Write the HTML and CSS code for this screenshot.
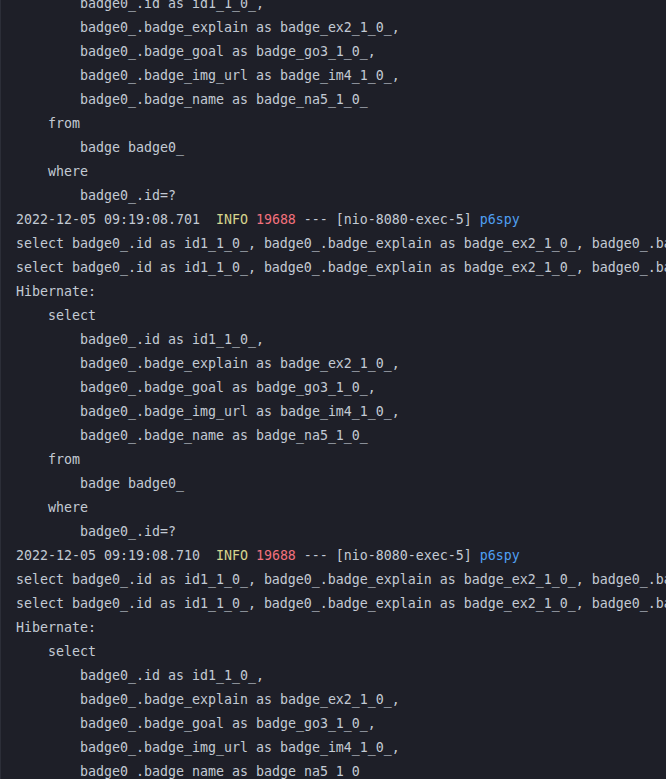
FILE: index.html
```html
<!DOCTYPE html>
<html>
<head>
<meta charset="utf-8">
<link rel="stylesheet" href="styles.css">
</head>
<body>
<div class="console">
<div class="log">
<div class="l i2">badge0_.id as id1_1_0_,</div>
<div class="l i2">badge0_.badge_explain as badge_ex2_1_0_,</div>
<div class="l i2">badge0_.badge_goal as badge_go3_1_0_,</div>
<div class="l i2">badge0_.badge_img_url as badge_im4_1_0_,</div>
<div class="l i2">badge0_.badge_name as badge_na5_1_0_</div>
<div class="l i1">from</div>
<div class="l i2">badge badge0_</div>
<div class="l i1">where</div>
<div class="l i2">badge0_.id=?</div>
<div class="l">2022-12-05 09:19:08.701  <span class="info">INFO</span> <span class="pid">19688</span> --- [nio-8080-exec-5] <span class="src">p6spy</span></div>
<div class="l">select badge0_.id as id1_1_0_, badge0_.badge_explain as badge_ex2_1_0_, badge0_.badge_goal as badge_go3_1_0_</div>
<div class="l">select badge0_.id as id1_1_0_, badge0_.badge_explain as badge_ex2_1_0_, badge0_.badge_goal as badge_go3_1_0_</div>
<div class="l">Hibernate: </div>
<div class="l i1">select</div>
<div class="l i2">badge0_.id as id1_1_0_,</div>
<div class="l i2">badge0_.badge_explain as badge_ex2_1_0_,</div>
<div class="l i2">badge0_.badge_goal as badge_go3_1_0_,</div>
<div class="l i2">badge0_.badge_img_url as badge_im4_1_0_,</div>
<div class="l i2">badge0_.badge_name as badge_na5_1_0_</div>
<div class="l i1">from</div>
<div class="l i2">badge badge0_</div>
<div class="l i1">where</div>
<div class="l i2">badge0_.id=?</div>
<div class="l">2022-12-05 09:19:08.710  <span class="info">INFO</span> <span class="pid">19688</span> --- [nio-8080-exec-5] <span class="src">p6spy</span></div>
<div class="l">select badge0_.id as id1_1_0_, badge0_.badge_explain as badge_ex2_1_0_, badge0_.badge_goal as badge_go3_1_0_</div>
<div class="l">select badge0_.id as id1_1_0_, badge0_.badge_explain as badge_ex2_1_0_, badge0_.badge_goal as badge_go3_1_0_</div>
<div class="l">Hibernate: </div>
<div class="l i1">select</div>
<div class="l i2">badge0_.id as id1_1_0_,</div>
<div class="l i2">badge0_.badge_explain as badge_ex2_1_0_,</div>
<div class="l i2">badge0_.badge_goal as badge_go3_1_0_,</div>
<div class="l i2">badge0_.badge_img_url as badge_im4_1_0_,</div>
<div class="l i2">badge0_.badge_name as badge_na5_1_0_</div>
<div class="l i1">from</div>
</div>
</div>
</body>
</html>
```
FILE: styles.css
```css
html, body {
  margin: 0;
  padding: 0;
  background: #1e1f28;
  overflow: hidden;
}
.console {
  width: 666px;
  height: 779px;
  box-sizing: border-box;
  border-left: 1px solid #2c2e38;
  overflow: hidden;
  background: #1e1f28;
}
.log {
  margin-top: -8px;
  padding-left: 15px;
  font-family: "DejaVu Sans Mono", monospace;
  font-size: 13.29px;
  line-height: 24px;
  color: #c3cad4;
}
.l {
  white-space: pre;
  height: 24px;
}
.i1 { padding-left: 32px; }
.i2 { padding-left: 64px; }
.info { color: #d6d58e; }
.pid { color: #f2717d; }
.src { color: #4f9ff2; }
```
